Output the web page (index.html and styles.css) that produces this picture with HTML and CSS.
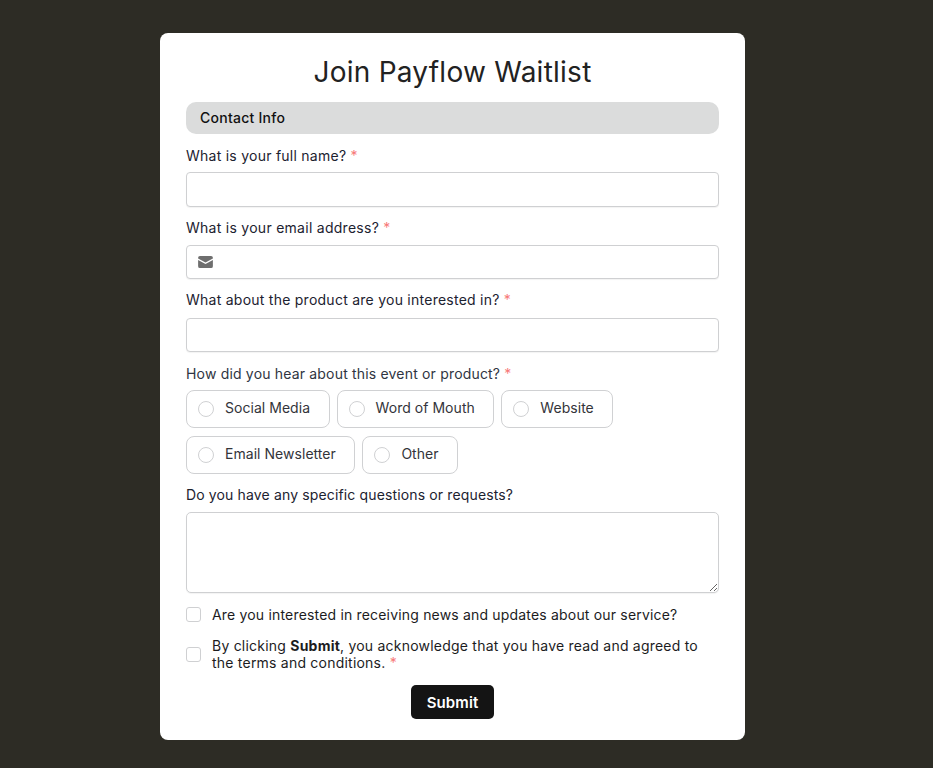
FILE: index.html
```html
<!DOCTYPE html>
<html lang="en">
<head>
<meta charset="utf-8">
<title>Join Payflow Waitlist</title>
<link rel="stylesheet" href="styles.css">
</head>
<body>
<form class="card">
  <h1 class="title">Join Payflow Waitlist</h1>
  <div class="section">Contact Info</div>

  <div class="field f-name">
    <label class="label">What is your full name? <span class="req">*</span></label>
    <input class="input" type="text">
  </div>

  <div class="field f-email">
    <label class="label">What is your email address? <span class="req">*</span></label>
    <div class="input icon-input">
      <svg class="mail" viewBox="0 0 16 13" width="15" height="12" aria-hidden="true">
        <path d="M2 0h12a2 2 0 0 1 2 2v.6L8 7 0 2.6V2a2 2 0 0 1 2-2z"/>
        <path d="M0 4.4 8 8.8l8-4.4V11a2 2 0 0 1-2 2H2a2 2 0 0 1-2-2z"/>
      </svg>
    </div>
  </div>

  <div class="field f-product">
    <label class="label">What about the product are you interested in? <span class="req">*</span></label>
    <input class="input" type="text">
  </div>

  <div class="field f-hear">
    <label class="label">How did you hear about this event or product? <span class="req">*</span></label>
    <div class="options">
      <label class="option"><span class="radio"></span><span class="option-text">Social Media</span></label>
      <label class="option"><span class="radio"></span><span class="option-text">Word of Mouth</span></label>
      <label class="option"><span class="radio"></span><span class="option-text">Website</span></label>
      <label class="option"><span class="radio"></span><span class="option-text">Email Newsletter</span></label>
      <label class="option"><span class="radio"></span><span class="option-text">Other</span></label>
    </div>
  </div>

  <div class="field f-questions">
    <label class="label">Do you have any specific questions or requests?</label>
    <textarea class="textarea"></textarea>
  </div>

  <label class="check check-one"><span class="box"></span><span>Are you interested in receiving news and updates about our service?</span></label>
  <label class="check check-two"><span class="box"></span><span class="check-text">By clicking <b>Submit</b>, you acknowledge that you have read and agreed to the terms and conditions. <span class="req">*</span></span></label>

  <div class="actions"><button class="submit" type="button">Submit</button></div>
</form>
</body>
</html>
```
FILE: styles.css
```css
* { box-sizing: border-box; }
html, body { margin: 0; height: 100%; }
body {
  background: #2d2c25;
  font-family: "Inter", "Liberation Sans", sans-serif;
  color: #1c1c1e;
  padding-top: 33px;
  height: 768px;
  overflow: hidden;
}
.card {
  width: 585px;
  height: 707px;
  margin-left: 160px;
  background: #fff;
  border-radius: 8px;
  padding: 21px 26px 0;
  display: flex;
  flex-direction: column;
}
.title {
  margin: 0;
  height: 36px;
  line-height: 36px;
  font-size: 28px;
  font-weight: 400;
  text-align: center;
  color: #222;
  letter-spacing: 0.25px;
}
.section {
  margin-top: 12px;
  height: 32px;
  line-height: 31px;
  padding-left: 14px;
  background: #dbdcdc;
  border-radius: 10px;
  font-size: 14px;
  font-weight: 500;
  color: #111;
  letter-spacing: 0.25px;
}
.field { display: flex; flex-direction: column; }
.f-name { margin-top: 12px; }
.f-email { margin-top: 11px; }
.f-product { margin-top: 11px; }
.f-hear { margin-top: 12px; }
.f-questions { margin-top: 11px; }
.label {
  height: 19px;
  line-height: 19px;
  font-size: 14px;
  font-weight: 400;
  color: #1c2230;
  margin-bottom: 7px;
  letter-spacing: 0.25px;
}
.f-email .label { margin-bottom: 8px; letter-spacing: 0.27px; }
.f-product .label { margin-bottom: 9px; }
.f-hear .label { margin-bottom: 8px; letter-spacing: 0.18px; color: #2f3542; }
.f-questions .label { margin-bottom: 8px; letter-spacing: 0.14px; }
.req { color: #f77878; }
.input {
  height: 35px;
  width: 100%;
  background: #fff;
  border: 1px solid #cfd0d2;
  border-radius: 4px;
  box-shadow: 0 1px 1px rgba(0,0,0,.05);
  display: block;
}
.f-email .input, .f-product .input { height: 34px; }
.icon-input { display: flex; align-items: center; padding-left: 11px; }
.mail { fill: #6e6e6e; display: block; }
.options { display: flex; flex-wrap: wrap; gap: 8px 7px; margin-top: -1px; }
.option {
  height: 38px;
  display: flex;
  align-items: center;
  padding: 0 18.5px 0 11px;
  border: 1px solid #d0d1d3;
  border-radius: 8px;
  font-size: 14px;
  color: #33343a;
  letter-spacing: 0.04px;
}
.option-text { margin-bottom: 3px; }
.radio {
  width: 16px;
  height: 16px;
  border: 1px solid #d0d1d3;
  border-radius: 50%;
  margin-right: 11px;
  flex: none;
}
.textarea {
  height: 81px;
  width: 100%;
  border: 1px solid #cfd0d2;
  border-radius: 5px;
  box-shadow: 0 1px 1px rgba(0,0,0,.05);
  resize: vertical;
  display: block;
  outline: none;
}
.check {
  display: flex;
  align-items: center;
  font-size: 14px;
  line-height: 17px;
  color: #1c1c1e;
  letter-spacing: 0.18px;
}
.check-one { margin-top: 13px; height: 17px; }
.check-two { margin-top: 14px; }
.check-text { max-width: 495px; letter-spacing: 0.22px; }
.box {
  width: 15px;
  height: 15px;
  border: 1px solid #cfd0d2;
  border-radius: 3px;
  margin-right: 11px;
  flex: none;
}
.check b { font-weight: 700; }
.actions { display: flex; justify-content: center; margin-top: 14px; }
.submit {
  width: 83px;
  height: 34px;
  background: #141414;
  color: #fff;
  border: 0;
  border-radius: 5px;
  font-family: inherit;
  font-size: 15px;
  font-weight: 600;
  letter-spacing: 0.1px;
}
```
